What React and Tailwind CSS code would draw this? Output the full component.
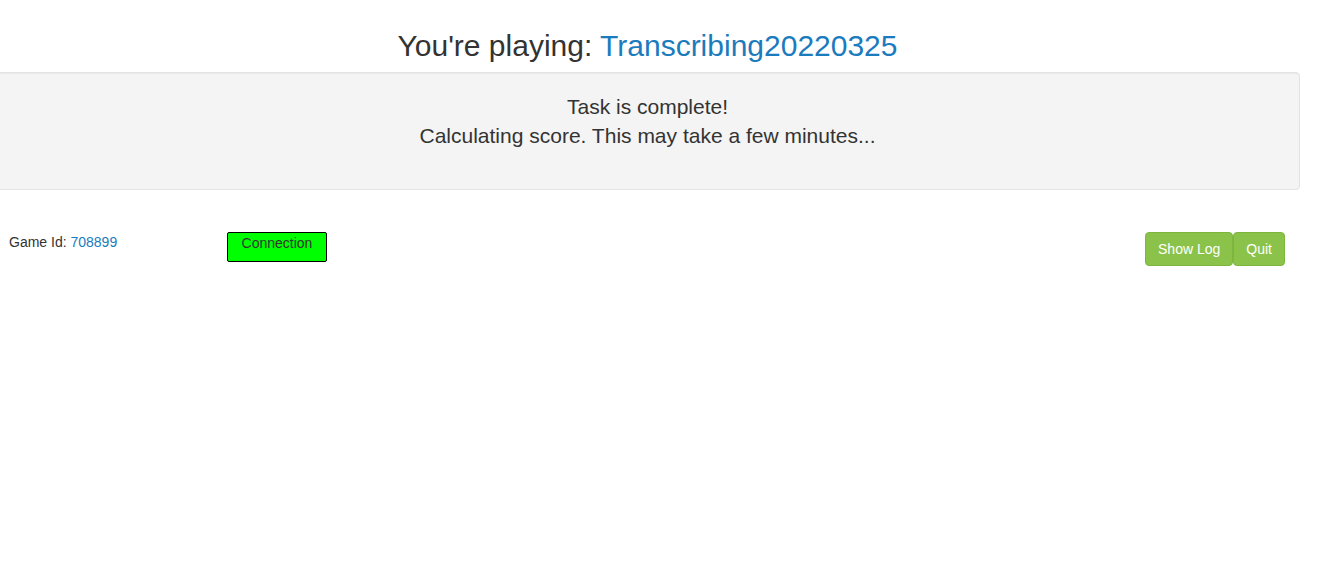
export default function App() {
  return (
    <div className="min-h-screen bg-white text-[#333] font-['Liberation_Sans',Arial,sans-serif] overflow-hidden">
      <div className="pt-[29px] -ml-[5px] mr-[29px]">
        <h2 className="text-center text-[30px] leading-[33px] mb-[10px]">
          You're playing: <span className="text-[#1b7bbd]">Transcribing20220325</span>
        </h2>

        <div className="min-h-[118px] bg-[#f4f4f4] border border-[#e3e3e3] rounded shadow-[inset_0_1px_1px_rgba(0,0,0,0.05)] pt-[19px] pb-[19px] px-[19px] text-center text-[21px] leading-[29px]">
          <div>Task is complete!</div>
          <div>Calculating score. This may take a few minutes...</div>
        </div>
      </div>

      <div className="flex items-start mt-[42px] pl-[9px] pr-[44px]">
        <div className="w-[218px] text-[14px] leading-[20px]">
          Game Id: <span className="text-[#1b7bbd]">708899</span>
        </div>
        <div className="w-[100px] h-[30px] bg-[#00ff00] border border-black rounded-[2px] text-center text-[14px] leading-[20px] text-[#333]">
          Connection
        </div>
        <div className="ml-auto flex">
          <button className="h-[34px] px-[12px] bg-[#8bc34a] border border-[#7db63d] rounded text-white text-[14px]">
            Show Log
          </button>
          <button className="h-[34px] px-[12px] bg-[#8bc34a] border border-[#7db63d] rounded text-white text-[14px]">
            Quit
          </button>
        </div>
      </div>
    </div>
  );
}
